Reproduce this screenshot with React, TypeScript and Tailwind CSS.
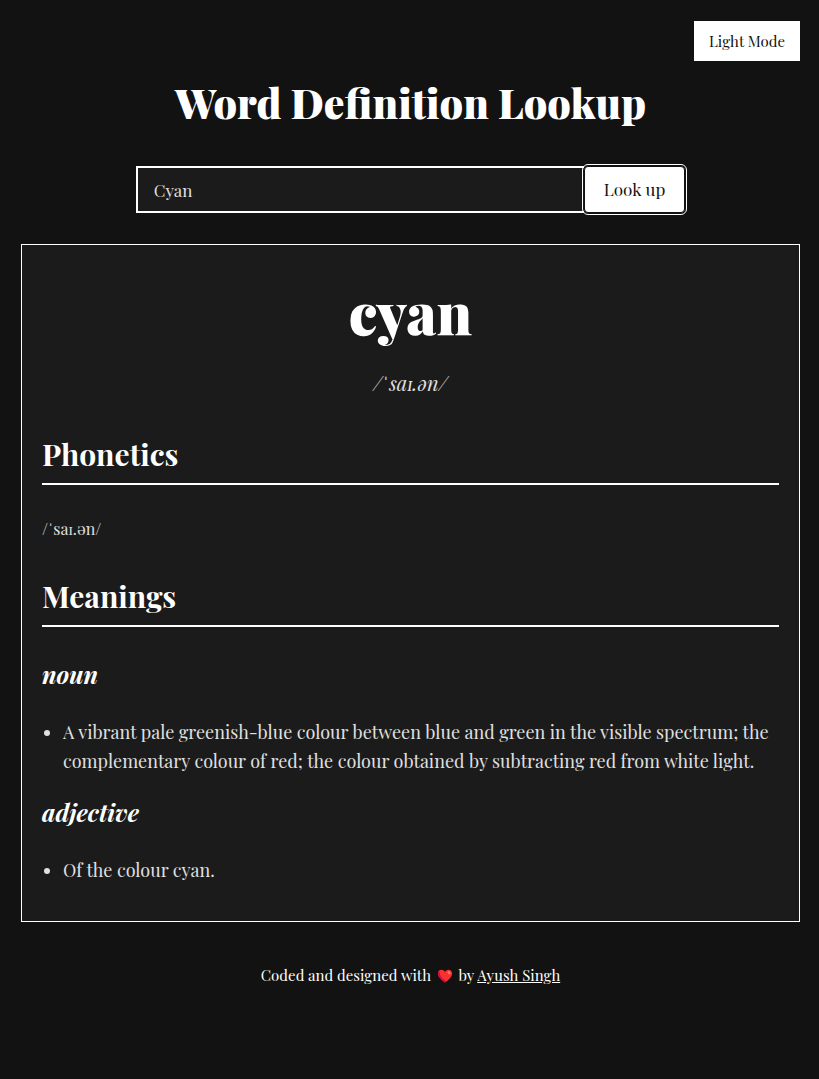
import { useState } from "react";

const meanings = [
  {
    part: "noun",
    definitions: [
      "A vibrant pale greenish-blue colour between blue and green in the visible spectrum; the complementary colour of red; the colour obtained by subtracting red from white light.",
    ],
  },
  { part: "adjective", definitions: ["Of the colour cyan."] },
];

function Heart() {
  return (
    <svg viewBox="0 0 18 16" className="mx-0.5 inline-block h-4 w-4 align-[-3px]" role="img" aria-label="love">
      <path
        d="M9 15.400C6 13.200 1 9.600 1 5.200 1 2.800 2.700 1 4.900 1 6.700 1 8.200 2 9 3.600 9.800 2 11.300 1 13.100 1 15.300 1 17 2.800 17 5.200c0 4.400-5 8-8 10.200z"
        fill="#f8312f"
      />
      <path d="M1 5.200c0 4.400 5 8 8 10.200l2-1.500C7 12 3 9 2.600 2 1.600 2.700 1 3.900 1 5.200z" fill="#ca0b4a" />
      <ellipse cx="13.600" cy="4.400" rx="1.500" ry="2" transform="rotate(-35 13.600 4.400)" fill="#f37366" />
    </svg>
  );
}

function SectionTitle({ children }: { children: string }) {
  return (
    <h3 className="border-b-2 border-white pb-[11px] text-[30px] leading-9 font-bold text-white">{children}</h3>
  );
}

export default function App() {
  const [word, setWord] = useState("Cyan");

  return (
    <div className="min-h-screen bg-[#121212] pt-[21px] pr-[19px] pl-[21px] font-['Playfair_Display','Liberation_Serif',serif] text-[#e0e0e0]">
      <div className="flex justify-end">
        <button type="button" className="h-10 bg-white px-[15px] text-[15px] text-[#121212]">
          Light Mode
        </button>
      </div>
      <main>
        <h1 className="mt-[13px] text-center text-[41px] leading-14 font-black text-white">Word Definition Lookup</h1>
        <form className="mt-9 flex justify-center" onSubmit={(e) => e.preventDefault()}>
          <input
            aria-label="Word"
            value={word}
            onChange={(e) => setWord(e.target.value)}
            className="h-[47px] w-[448px] border-2 border-r-0 border-white bg-[#1b1b1b] px-4 text-[17px]"
          />
          <button
            type="submit"
            className="rounded-sm border border-[#121212] bg-white px-[19px] text-[17px] text-[#121212] outline outline-offset-1 outline-white"
          >
            Look up
          </button>
        </form>
        <section className="mt-[31px] border border-white bg-[#1b1b1b] px-5 pt-5 pb-9">
          <h2 className="mt-[14px] text-center text-[57px] leading-16 font-black text-white">cyan</h2>
          <p className="mt-[26px] text-center text-xl italic">/ˈsaɪ.ən/</p>
          <div className="mt-[39px]">
            <SectionTitle>Phonetics</SectionTitle>
          </div>
          <p className="mt-8 text-base">/ˈsaɪ.ən/</p>
          <div className="mt-[37px]">
            <SectionTitle>Meanings</SectionTitle>
          </div>
          <div className="mt-[31px] flex flex-col gap-5">
            {meanings.map((m) => (
              <div key={m.part}>
                <h4 className="text-2xl font-bold text-white italic">{m.part}</h4>
                <ul className="mt-7 list-disc pl-[21px] text-lg leading-[29px]">
                  {m.definitions.map((d) => (
                    <li key={d}>{d}</li>
                  ))}
                </ul>
              </div>
            ))}
          </div>
        </section>
      </main>
      <footer className="mt-[42px] text-center text-[15px] text-white">
        Coded and designed with <Heart /> by{" "}
        <a href="#author" className="underline">
          Ayush Singh
        </a>
      </footer>
    </div>
  );
}
